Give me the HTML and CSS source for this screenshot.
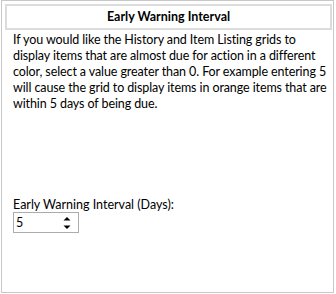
FILE: index.html
```html
<!DOCTYPE html>
<html lang="en">
<head>
  <meta charset="UTF-8">
  <title>Early Warning Interval</title>
  <link rel="stylesheet" href="styles.css">
</head>
<body>
  <div class="panel">
    <div class="panel-header">Early Warning Interval</div>
    <p class="description">
      If you would like the History and Item Listing grids to
      display items that are almost due for action in a different
      color, select a value greater than 0. For example entering 5
      will cause the grid to display items in orange items that are
      within 5 days of being due.
    </p>
    <div class="field">
      <label for="interval">Early Warning Interval (Days):</label>
      <div class="spin-box">
        <span class="spin-value" id="interval">5</span>
        <span class="spin-buttons">
          <svg width="8" height="14" viewBox="0 0 8 14">
            <path d="M0.5 4.5 L4 1 L7.5 4.5 Z" fill="#000"/>
            <path d="M0.5 9.5 L4 13 L7.5 9.5 Z" fill="#000"/>
          </svg>
        </span>
      </div>
    </div>
  </div>
</body>
</html>
```

FILE: styles.css
```css
* {
    margin: 0;
    padding: 0;
    box-sizing: border-box;
}

body {
    font-family: Lato, "Noto Sans", sans-serif;
    font-size: 12.5px;
    color: #000;
    background: #fff;
}

.panel {
    margin-left: 1px;
    width: 333px;
    height: 293px;
    border: 1px solid #c8c8c8;
    display: flex;
    flex-direction: column;
}

.panel-header {
    margin: 3px 1px 0 3px;
    height: 26px;
    border: 2px solid #dcdcdc;
    font-weight: bold;
    text-align: center;
    line-height: 21px;
}

.description {
    margin-top: 2px;
    padding: 0 0 0 11px;
    line-height: 16px;
    letter-spacing: -0.1px;
}

.field {
    margin-top: 85px;
    padding-left: 11px;
    display: flex;
    flex-direction: column;
    align-items: flex-start;
}

.field label {
    line-height: 15px;
}

.spin-box {
    width: 66px;
    height: 21px;
    border: 1px solid #acacac;
    display: flex;
    align-items: center;
    justify-content: space-between;
    padding: 0 7px 0 2px;
}

.spin-buttons {
    display: flex;
}
```
